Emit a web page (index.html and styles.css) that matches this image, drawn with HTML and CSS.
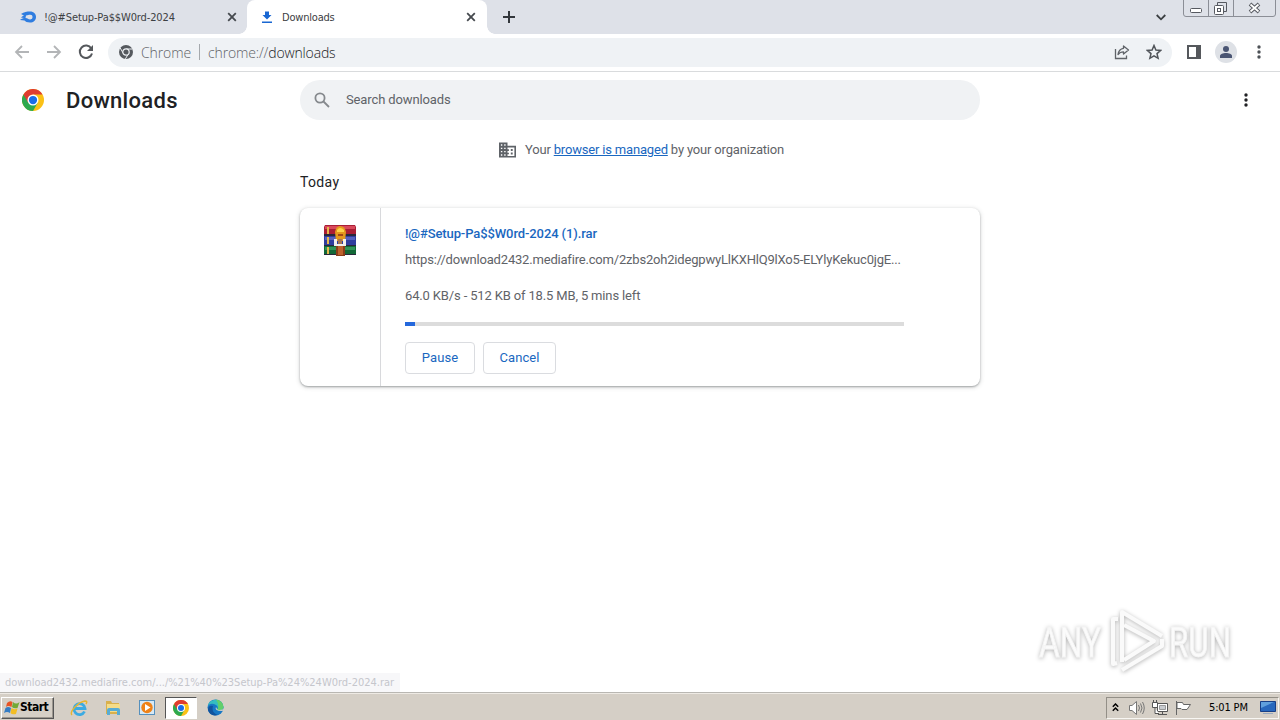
FILE: index.html
```html
<!DOCTYPE html>
<html lang="en">
<head>
    <meta charset="UTF-8">
    <meta name="viewport" content="width=device-width, initial-scale=1.0">
    <title>Downloads</title>
    <link rel="stylesheet" href="styles.css">
</head>
<body>
    <svg width="0" height="0" class="defs">
        <symbol id="chrome" viewBox="0 0 24 24">
            <circle cx="12" cy="12" r="12" fill="#fbc116"/>
            <path d="M12 12L1.6 6A12 12 0 0 0 12 24L17.2 15Z" fill="#2da94f"/>
            <path d="M12 12L6.8 15L1.6 6A12 12 0 0 1 22.4 6H12Z" fill="#df3c30"/>
            <circle cx="12" cy="12" r="6" fill="#fff"/>
            <circle cx="12" cy="12" r="4.5" fill="#1a6de8"/>
        </symbol>
        <symbol id="close" viewBox="0 0 10 10">
            <path d="M1.2 1.2L8.8 8.8M8.8 1.2L1.2 8.8" stroke="#45494e" stroke-width="1.8"/>
        </symbol>
        <symbol id="dots" viewBox="0 0 4 14">
            <circle cx="2" cy="2" r="1.7"/><circle cx="2" cy="7" r="1.7"/><circle cx="2" cy="12" r="1.7"/>
        </symbol>
    </svg>

    <div class="tabs">
        <div class="tab">
            <svg class="tab-icon" width="16" height="16" viewBox="0 0 16 16">
                <path d="M1 5C4 3 7 2.500 10 2.500C14 2.500 16 5 16 8C16 11.500 13.500 13.500 10 13.500C7 13.500 5.500 12.500 4.500 11.500L0 11C1 9.500 3 9.500 4 9L1 8.500C2 7.500 3 7 4 6.500Z" fill="#2f7de0"/>
                <path d="M6 6.500C8 6.500 8.500 5.800 10.300 5.800A2.300 2.300 0 0 1 10.300 10.400C8 10.400 8 9 5.500 9Z" fill="#dee1e8"/>
            </svg>
            <span class="tab-title first">!@#Setup-Pa$$W0rd-2024</span>
            <svg class="tab-close" width="10" height="10"><use href="#close"/></svg>
        </div>
        <div class="tab active">
            <svg class="tab-icon" width="12" height="13" viewBox="0 0 12 13">
                <path d="M4 0.500H8V4H10.500L6 8.500L1.500 4H4ZM1 10.500H11V12H1Z" fill="#1967d2"/>
            </svg>
            <span class="tab-title second">Downloads</span>
            <svg class="tab-close" width="10" height="10"><use href="#close"/></svg>
        </div>
        <svg class="new-tab" width="12" height="12" viewBox="0 0 12 12"><path d="M6 0V12M0 6H12" stroke="#33373c" stroke-width="2"/></svg>
        <svg class="tab-search" width="10" height="7" viewBox="0 0 10 7"><path d="M.7 1L5 5.300L9.300 1" fill="none" stroke="#3c4043" stroke-width="1.8"/></svg>
        <div class="window-buttons">
            <svg width="93" height="17" viewBox="0 0 93 17" fill="none">
                <path d="M.5 0V14Q.5 16.500 3 16.500H90Q92.500 16.500 92.500 14V0M25.500 0V16.500M50.500 0V16.500" stroke="#8b8e96"/>
                <rect x="7.500" y="8.500" width="11" height="4" rx="1" fill="#fff" stroke="#565960"/>
                <path d="M34.500 5.500V2.500H43.500V11.500H40.500" stroke="#565960"/>
                <rect x="31.500" y="5.500" width="9" height="9" rx="1" fill="#fff" stroke="#565960"/>
                <rect x="34.500" y="8.500" width="3" height="3" stroke="#565960"/>
                <path d="M67 4L76 12M76 4L67 12" stroke="#565960" stroke-width="3.800"/>
                <path d="M67.500 4.500L75.500 11.500M75.500 4.500L67.500 11.500" stroke="#fff" stroke-width="1.800"/>
            </svg>
        </div>
    </div>

    <div class="toolbar">
        <svg class="nav-icon" width="16" height="14" viewBox="0 0 16 14"><path d="M15 7H2M8 1L2 7L8 13" fill="none" stroke="#b3b5b7" stroke-width="1.8"/></svg>
        <svg class="nav-icon" width="16" height="14" viewBox="0 0 16 14"><path d="M1 7H14M8 1L14 7L8 13" fill="none" stroke="#b3b5b7" stroke-width="1.8"/></svg>
        <svg class="nav-icon" width="16" height="16" viewBox="0 0 16 16">
            <path d="M13.300 4.500A6.200 6.200 0 1 0 14 9.500" fill="none" stroke="#55585c" stroke-width="2"/>
            <path d="M15 1V7H9Z" fill="#55585c"/>
        </svg>
        <div class="address">
            <svg width="14" height="14" viewBox="0 0 14 14">
                <circle cx="7" cy="7" r="7" fill="#55595e"/>
                <path d="M7 4H13.500M4.400 8.500L1.200 3M9.600 8.500L6.400 13.900" stroke="#eff2f5"/>
                <circle cx="7" cy="7" r="3.200" fill="#55595e" stroke="#eff2f5" stroke-width="1.200"/>
            </svg>
            <span class="address-label">Chrome</span>
            <span class="address-line"></span>
            <span class="address-url">chrome://<b>downloads</b></span>
            <svg class="share" width="16" height="16" viewBox="0 0 16 16" fill="none" stroke="#5f6368" stroke-width="1.300">
                <path d="M1.500 5V14.500H12.500V11.500"/>
                <path d="M9.500 2L14.500 6L9.500 10V7.800C7 7.800 5.500 8.500 4 10.500C4.500 7 6.500 4.700 9.500 4.300Z" stroke-linejoin="round"/>
            </svg>
            <svg width="16" height="16" viewBox="0 0 16 16"><path d="M8 1.500L9.900 6L14.700 6.400L11 9.600L12.100 14.300L8 11.800L3.900 14.300L5 9.600L1.300 6.400L6.100 6Z" fill="none" stroke="#505459" stroke-width="1.500"/></svg>
        </div>
        <svg class="panel" width="14" height="14" viewBox="0 0 14 14"><path d="M1 1H13V13H1Z" fill="none" stroke="#55585c" stroke-width="2"/><path d="M9 0H14V14H9Z" fill="#55585c"/></svg>
        <svg class="avatar" width="22" height="22" viewBox="0 0 22 22"><circle cx="11" cy="11" r="11" fill="#dee1e6"/><circle cx="11" cy="8" r="3" fill="#4a5573"/><path d="M5 17V15C5 13 8 12 11 12S17 13 17 15V17Z" fill="#4a5573"/></svg>
        <svg class="menu" width="4" height="14" fill="#4d5156"><use href="#dots"/></svg>
    </div>

    <div class="header">
        <svg class="logo" width="22" height="22"><use href="#chrome"/></svg>
        <h1>Downloads</h1>
        <div class="search">
            <svg width="16" height="16" viewBox="0 0 16 16" fill="none" stroke="#85898d" stroke-width="1.800"><circle cx="6" cy="6" r="4.600"/><path d="M9.500 9.500L15 15"/></svg>
            <span>Search downloads</span>
        </div>
        <svg class="more" width="4" height="14" fill="#202124"><use href="#dots"/></svg>
    </div>

    <div class="main">
        <div class="managed">
            <svg width="17" height="16" viewBox="0 0 18 16">
                <path d="M0 0H9V3.500H18V16H0Z" fill="#5f6368"/>
                <path d="M2 2H3.500V3.500H2ZM5.500 2H7V3.500H5.500ZM2 5.500H3.500V7H2ZM5.500 5.500H7V7H5.500ZM2 9H3.500V10.500H2ZM5.500 9H7V10.500H5.500ZM2 12.500H3.500V14H2ZM5.500 12.500H7V14H5.500ZM9 5.300H16.300V14.300H9V12.500H10.500V11H9V9H10.500V7.300H9Z" fill="#fff"/>
                <path d="M12.500 7H14.500V9H12.500ZM12.500 10.700H14.500V12.700H12.500Z" fill="#5f6368"/>
            </svg>
            <span>Your <a href="#">browser is managed</a> by your organization</span>
        </div>
        <h2>Today</h2>
        <div class="card">
            <div class="file-icon">
                <svg width="32" height="31" viewBox="0 0 32 31">
                    <path d="M1 0H31L32 2V9H0V2Z" fill="#a91e35"/><path d="M1 1H31V4H1Z" fill="#d8485b"/>
                    <path d="M0 11H32V20H0Z" fill="#303d9d"/><path d="M1 12H31V15H1Z" fill="#5562bf"/>
                    <path d="M0 21H32V30H0Z" fill="#126837"/><path d="M1 22H31V25H1Z" fill="#329457"/>
                    <path d="M0 9H32V11H0ZM0 20H32V21H0ZM0 29H32V30H0Z" fill="#29283b"/>
                    <path d="M4 2V9M4 12V19M4 22V29" stroke="#e7b64c" stroke-width="2"/>
                    <path d="M12 19H21V31H12Z" fill="#8a3d18"/><path d="M14 21H19V30H14Z" fill="#bd622c"/>
                    <path d="M11 7Q12 1 16 1Q21 1 22 7L21 16H12Z" fill="#e3991d"/><path d="M13 5Q16 1 20 5V7H13Z" fill="#ffd24a"/>
                    <path d="M14 9H19V11H14Z" fill="#a44819"/>
                    <path d="M10 14H13V19H19V14H22V21H10Z" fill="#f2efeb"/><path d="M14 14H18V19H14Z" fill="#a77451"/>
                </svg>
            </div>
            <div class="content">
                <a class="file-name" href="#">!@#Setup-Pa$$W0rd-2024 (1).rar</a>
                <div class="url">https://download2432.mediafire.com/2zbs2oh2idegpwyLlKXHlQ9lXo5-ELYlyKekuc0jgE...</div>
                <div class="description">64.0 KB/s - 512 KB of 18.5 MB, 5 mins left</div>
                <div class="progress"><div class="bar" style="width: 2%"></div></div>
                <div class="actions">
                    <button class="pause">Pause</button>
                    <button class="cancel">Cancel</button>
                </div>
            </div>
        </div>
    </div>

    <svg class="watermark" width="220" height="76" viewBox="0 0 220 76">
        <g class="mark-text">
            <text x="9" y="54" textLength="62" lengthAdjust="spacingAndGlyphs">ANY</text>
            <text x="139" y="54" textLength="62" lengthAdjust="spacingAndGlyphs">RUN</text>
        </g>
        <g class="mark-play">
            <path d="M92 59V9L132 33"/>
            <path d="M88 16H83V61L87 60M92 67L132 43V36M94 22L124 38L94 57"/>
        </g>
    </svg>

    <div class="status">download2432.mediafire.com/.../%21%40%23Setup-Pa%24%24W0rd-2024.rar</div>
    <div class="taskbar">
        <div class="start">
            <svg width="16" height="16" viewBox="0 0 16 16">
                <path d="M3 3Q6 0 8.500 2L7.500 7Q4 5 2 7Z" fill="#e75425"/><path d="M9 2Q12 5 15.500 2L13.500 8Q10 9 8 7Z" fill="#73a936"/>
                <path d="M1.500 8Q4 6 7 8L6 13Q3 11 0 13Z" fill="#347cc4"/><path d="M7.500 8Q10 10 13.500 8.500L12 14Q8 15 6.500 13Z" fill="#f2bd25"/>
            </svg>
            <span>Start</span>
        </div>
        <div class="quick">
            <svg width="18" height="18" viewBox="0 0 18 18">
                <path d="M14.500 12.500A5.500 5.500 0 1 1 15 9.500H5" fill="none" stroke="#3babe2" stroke-width="2.800"/>
                <path d="M2 16C-1 13 8 3 15 2Q18 2 16 5" fill="none" stroke="#e6b52f" stroke-width="1.400"/>
            </svg>
        </div>
        <div class="quick">
            <svg width="18" height="18" viewBox="0 0 18 18">
                <path d="M2 2H7L8 4H15V15H2Z" fill="#d9b04c"/><path d="M3 5H16V13H3Z" fill="#f5dc88"/>
                <path d="M3 16V11Q3 9 5 9H14Q16 9 16 11V16H13V12H6V16Z" fill="#58acd4"/>
            </svg>
        </div>
        <div class="quick">
            <svg width="18" height="18" viewBox="0 0 18 18">
                <rect x="1.500" y="1.500" width="15" height="14" fill="#d7e9f5" stroke="#5590bd"/>
                <circle cx="9" cy="8.500" r="5.700" fill="#ef8217"/><path d="M7 5L12.500 8.500L7 12Z" fill="#fff"/>
            </svg>
        </div>
        <div class="quick current"><svg width="16" height="16"><use href="#chrome"/></svg></div>
        <div class="quick">
            <svg width="17" height="17" viewBox="0 0 17 17">
                <circle cx="8.500" cy="8.500" r="8" fill="#1677c5"/>
                <path d="M.7 7A8 8 0 0 1 16.500 8Q16 12 10 11Q12 8 9 6Q4 3 .7 7Z" fill="#35bdc0"/>
                <path d="M9 .5A8 8 0 0 1 16.500 8Q16 12 10 11Q13 7 9 .5Z" fill="#62cf6b"/>
                <path d="M6 7Q4 14 11 16Q3 18 1 11Q1 6 6 7Z" fill="#12539d"/>
                <path d="M9 8Q7 12 15.500 12L17 10Q11 12 10 10Z" fill="#d6d1c9"/>
            </svg>
        </div>
        <div class="tray">
            <svg width="7" height="9" viewBox="0 0 7 9"><path d="M.8 3.700L3.500 1L6.200 3.700M.8 7.700L3.500 5L6.200 7.700" fill="none" stroke="#000" stroke-width="1.500"/></svg>
            <svg class="volume" width="17" height="16" viewBox="0 0 17 16" fill="none" stroke="#777"><path d="M1.500 5.500H4L8.500 1.500V14.500L4 10.500H1.500Z" fill="#fff"/><path d="M10.500 5Q12.500 8 10.500 11M12.500 3.500Q15.500 8 12.500 12.500M14.500 2Q18 8 14.500 14"/></svg>
            <svg class="network" width="16" height="16" viewBox="0 0 16 16" fill="#fff" stroke="#555"><path d="M5.500 3.500H15.500V11.500H5.500ZM10.500 12V14.500M6 14.500H15"/><path d="M.5 2.500H5.500V7.500H.5ZM1.500 0V2M4.500 0V2M3 8V13.500H7"/><path d="M7.500 5.500H13.500V9.500H7.500Z" fill="#c9ccd0" stroke="#999"/></svg>
            <svg class="flag" width="17" height="16" viewBox="0 0 17 16" fill="#fff" stroke="#666"><path d="M1.500 1V15M2 2.500H7.500L8.500 4.500H15.500L12 9.500H7L6 8.500H2Z"/></svg>
            <span class="clock">5:01 PM</span>
            <svg class="desktop" width="16" height="15" viewBox="0 0 16 15"><path d="M.5 1.500H15.500V11.500H.5Z" fill="#2868bd" stroke="#183f86"/><path d="M1 2H14L1 8Z" fill="#60a0dd"/><path d="M3 13H13V14H3Z" fill="#98a9bf"/></svg>
        </div>
    </div>
</body>
</html>
```
FILE: styles.css
```css
* {
    box-sizing: border-box;
}
body {
    display: flex;
    flex-direction: column;
    width: 1280px;
    height: 720px;
    margin: 0;
    overflow: hidden;
    background-color: #fff;
    color: #202124;
    font-family: Roboto, Arial, sans-serif;
    font-size: 13px;
}
svg {
    display: block;
    flex-shrink: 0;
}
.defs {
    position: absolute;
}
.tabs {
    display: flex;
    height: 34px;
    background-color: #dee1e8;
}
.tab {
    display: flex;
    align-items: center;
    width: 247px;
    padding-left: 20px;
    font-family: "DejaVu Sans Condensed", "DejaVu Sans", sans-serif;
    font-size: 11px;
    color: #3c4043;
}
.tab-title {
    margin-left: 8px;
    white-space: nowrap;
}
.first {
    letter-spacing: -0.13px;
}
.second {
    margin-left: 9px;
    letter-spacing: -0.2px;
}
.tab-close {
    margin: 0 10px 0 auto;
}
.tab.active {
    position: relative;
    width: 240px;
    padding-left: 14px;
    background-color: #fff;
    border-radius: 8px 8px 0 0;
}
.tab.active::before,
.tab.active::after {
    content: "";
    position: absolute;
    bottom: 0;
    width: 8px;
    height: 8px;
}
.tab.active::before {
    left: -8px;
    background: radial-gradient(circle at 0 0, transparent 7.5px, #fff 8px);
}
.tab.active::after {
    right: -8px;
    background: radial-gradient(circle at 100% 0, transparent 7.5px, #fff 8px);
}
.tab.active .tab-close {
    margin-right: 11px;
}
.new-tab {
    margin: 11px 0 0 16px;
}
.tab-search {
    margin: 14px 17px 0 auto;
}
.window-buttons {
    width: 97px;
}
.toolbar {
    display: flex;
    align-items: center;
    height: 38px;
    padding: 0 19px 1px 14px;
    border-bottom: 1px solid #d9dbdd;
}
.nav-icon {
    margin-right: 16px;
}
.nav-icon + .address {
    margin-left: -2px;
}
.address {
    display: flex;
    align-items: center;
    width: 1064px;
    flex-shrink: 0;
    height: 29px;
    padding: 0 10px 0 11px;
    border-radius: 15px;
    background-color: #eff2f5;
    font-family: "Open Sans", "Noto Sans", sans-serif;
    font-size: 14px;
    font-weight: 300;
    color: #5f6368;
}
.address-label {
    margin-left: 8px;
    letter-spacing: -0.1px;
}
.address-line {
    width: 1px;
    height: 16px;
    margin: 0 8px;
    background-color: #a5a9ad;
}
.address-url {
    letter-spacing: -0.15px;
}
.address-url b {
    color: #202124;
    font-weight: 300;
}
.share {
    margin: 0 16px 0 auto;
}
.panel {
    margin-left: 15px;
}
.avatar {
    margin-left: 14px;
}
.menu {
    margin-left: 20px;
}
.header {
    display: flex;
    align-items: center;
    height: 56px;
    padding: 0 32px 0 22px;
}
h1 {
    width: 234px;
    margin: 0 0 0 22px;
    font-size: 22px;
    font-weight: 500;
    letter-spacing: 0.3px;
}
.search {
    display: flex;
    align-items: center;
    width: 680px;
    height: 40px;
    padding-left: 14px;
    border-radius: 20px;
    background-color: #f0f2f4;
    color: #5f6368;
}
.search span {
    margin-left: 16px;
    padding-bottom: 2px;
    letter-spacing: -0.12px;
}
.more {
    margin-left: auto;
}
.main {
    width: 680px;
    margin: 0 auto;
    color: #5f6368;
}
.managed {
    display: flex;
    align-items: center;
    height: 16px;
    margin: 14px 0 0 199px;
}
.managed span {
    margin-left: 9px;
    padding-bottom: 2px;
    letter-spacing: -0.18px;
    white-space: nowrap;
}
a {
    color: #1967c0;
}
h2 {
    margin: 16px 0 17px;
    color: #202124;
    font-size: 14px;
    font-weight: 400;
    line-height: 17px;
    letter-spacing: 0.35px;
}
.card {
    display: flex;
    height: 178px;
    border-radius: 8px;
    background-color: #fff;
    box-shadow: 0 1px 2px rgba(60,64,67,0.4), 0 1px 4px 1px rgba(60,64,67,0.15);
}
.file-icon {
    width: 81px;
    padding: 17px 0 0 24px;
    border-right: 1px solid #d8d9dc;
}
.content {
    width: 523px;
    padding: 18px 0 0 24px;
    line-height: 16px;
    white-space: nowrap;
}
.file-name {
    display: block;
    font-weight: 500;
    letter-spacing: -0.1px;
    text-decoration: none;
}
.url {
    margin-top: 10px;
    letter-spacing: -0.19px;
}
.description {
    margin-top: 20px;
    letter-spacing: -0.15px;
}
.progress {
    height: 4px;
    margin-top: 18px;
    background-color: #dcdcdc;
}
.bar {
    height: 4px;
    background-color: #2468dc;
}
.actions {
    display: flex;
    gap: 8px;
    margin-top: 16px;
}
button {
    width: 70px;
    height: 32px;
    padding: 0 0 2px;
    border: 1px solid #dadce0;
    border-radius: 4px;
    background-color: #fff;
    color: #1967c0;
    font-family: inherit;
    font-size: 13px;
    font-weight: 400;
    letter-spacing: 0.1px;
}
.cancel {
    width: 73px;
}
.watermark {
    position: absolute;
    left: 1030px;
    top: 603px;
    filter: drop-shadow(0 1px 2px rgba(0,0,0,0.3));
}
.mark-text {
    fill: #fbfbfb;
    stroke: #f4f4f4;
    stroke-width: 1;
    font-family: Roboto, sans-serif;
    font-size: 43px;
}
.mark-play {
    fill: none;
    stroke: #fafafa;
    stroke-width: 4;
    stroke-linejoin: round;
}
.status {
    width: 400px;
    height: 19px;
    margin-top: auto;
    padding-left: 5px;
    background-color: #f7f7f9;
    color: #c5c6cc;
    font-family: "DejaVu Sans Condensed", "DejaVu Sans", sans-serif;
    font-size: 11px;
    line-height: 20px;
    letter-spacing: -0.01px;
    white-space: nowrap;
}
.taskbar {
    display: flex;
    align-items: center;
    height: 28px;
    padding-top: 2px;
    border-top: 1px solid #b9b7b2;
    box-shadow: inset 0 1px #eeeae4;
    background-color: #d5cfc6;
    color: #000;
    font-family: "DejaVu Sans Condensed", "DejaVu Sans", sans-serif;
    font-size: 11px;
}
.start {
    display: flex;
    align-items: center;
    gap: 0;
    width: 53px;
    height: 22px;
    margin: 0 9px 0 1px;
    padding-left: 2px;
    border: 1px solid;
    border-color: #fff #555 #555 #fff;
    box-shadow: inset -1px -1px #9c978f;
    font-size: 12px;
    font-weight: bold;
    letter-spacing: -0.5px;
}
.start span {
    padding-bottom: 2px;
}
.quick {
    display: flex;
    align-items: center;
    justify-content: center;
    width: 32px;
    height: 22px;
    margin-right: 2px;
}
.current {
    border: 1px solid;
    border-color: #555 #fff #fff #555;
    background-color: #fff;
}
.tray {
    display: flex;
    align-items: center;
    width: 173px;
    height: 22px;
    margin-left: auto;
    margin-right: 1px;
    padding-left: 5px;
    border: 1px solid;
    border-color: #938f87 #f8f6f2 #f8f6f2 #938f87;
}
.volume {
    margin-left: 9px;
}
.network,
.flag {
    margin-left: 7px;
}
.clock {
    margin-left: 17px;
    letter-spacing: -0.15px;
    white-space: nowrap;
}
.desktop {
    margin-left: auto;
    margin-right: 2px;
}
```
